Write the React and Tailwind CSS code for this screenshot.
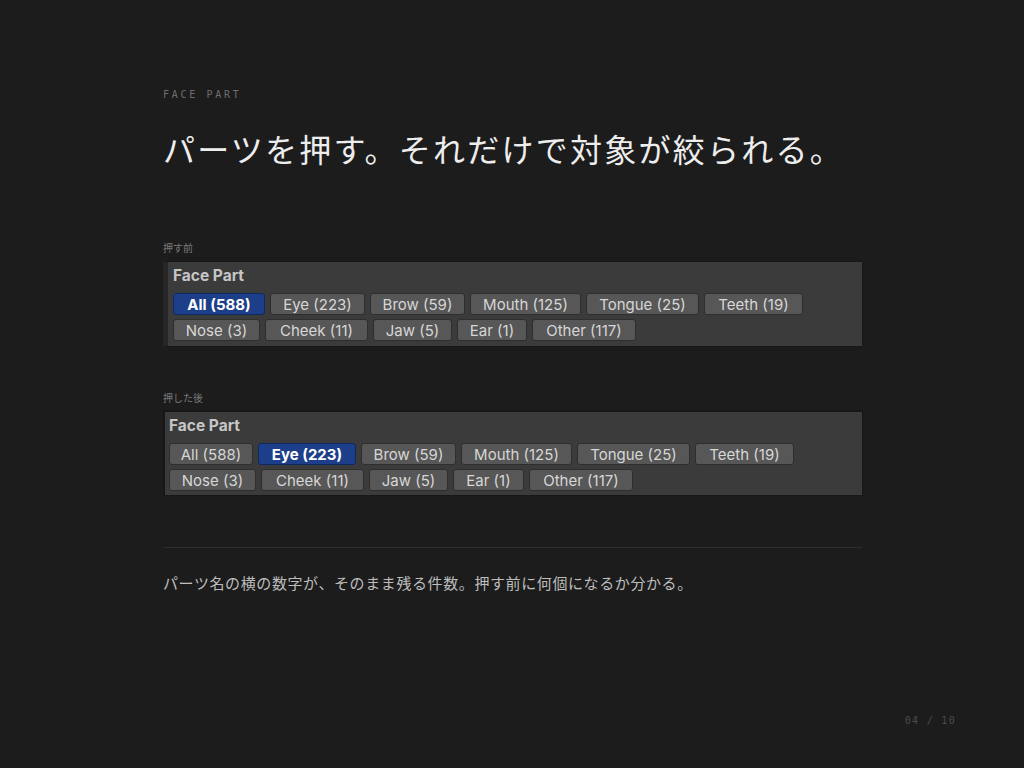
import React from "react";

const rowsBefore = [
  [["All", 588, 92], ["Eye", 223, 95], ["Brow", 59, 95], ["Mouth", 125, 111], ["Tongue", 25, 113], ["Teeth", 19, 99]],
  [["Nose", 3, 87], ["Cheek", 11, 103], ["Jaw", 5, 79], ["Ear", 1, 70], ["Other", 117, 104]],
];

const rowsAfter = [
  [["All", 588, 84], ["Eye", 223, 98], ["Brow", 59, 95], ["Mouth", 125, 111], ["Tongue", 25, 113], ["Teeth", 19, 99]],
  [["Nose", 3, 87], ["Cheek", 11, 103], ["Jaw", 5, 79], ["Ear", 1, 71], ["Other", 117, 104]],
];

const PartButton = ({ label, count, width, active }) => (
  <div
    className={
      active
        ? "shrink-0 h-[22px] flex items-center justify-center rounded-[3px] border border-[#0e2a63] bg-[#1d3e88] text-white font-bold text-[15px] leading-none"
        : "shrink-0 h-[22px] flex items-center justify-center rounded-[3px] border border-[#2e2e2e] bg-[#575757] text-[#d6d6d6] text-[15px] leading-none"
    }
    style={{ width }}
  >
    {label} ({count})
  </div>
);

const FacePanel = ({ rows, active, edge }) => (
  <div
    className={
      edge
        ? "w-[700px] h-[86px] border border-[#171717] border-l-[5px] border-l-[#262626] bg-[#3b3b3b] pl-[5px] pt-[5px]"
        : "w-[700px] h-[86px] border-2 border-[#171717] border-r border-b bg-[#3b3b3b] pl-[4px] pt-[5px]"
    }
    style={{ fontFamily: "Inter, 'Liberation Sans', sans-serif" }}
  >
    <div className="text-[15.5px] font-bold text-[#c6c6c6] leading-[18px] h-[22px]">Face Part</div>
    <div className="flex flex-col gap-[4px] mt-[4px]">
      {rows.map((row, i) => (
        <div key={i} className="flex gap-[5px]">
          {row.map(([l, c, w]) => (
            <PartButton key={l} label={l} count={c} width={w} active={l === active} />
          ))}
        </div>
      ))}
    </div>
  </div>
);

const jp = { fontFamily: "'Noto Sans CJK JP', 'Noto Sans', sans-serif" };
const mono = { fontFamily: "'DejaVu Sans Mono', 'Liberation Mono', monospace" };

export default function App() {
  return (
    <div className="w-[1024px] h-[768px] bg-[#1c1c1c] flex flex-col overflow-hidden">
      <div className="pl-[163px] pt-[89px]">
        <div className="text-[10px] leading-[12px] tracking-[0.27em] text-[#6e6e6e]" style={mono}>
          FACE PART
        </div>
        <h1 className="mt-[25px] text-[32px] leading-[44px] tracking-[0.07em] text-[#ededed]" style={jp}>
          パーツを押す。それだけで対象が絞られる。
        </h1>

        <div className="mt-[71px] text-[10px] leading-[14px] text-[#7a7a7a]" style={jp}>押す前</div>
        <div className="mt-[6px]">
          <FacePanel rows={rowsBefore} active="All" edge />
        </div>

        <div className="mt-[44px] text-[10px] leading-[14px] text-[#7a7a7a]" style={jp}>押した後</div>
        <div className="mt-[5px]">
          <FacePanel rows={rowsAfter} active="Eye" />
        </div>

        <div className="mt-[51px] w-[699px] h-px bg-[#2d2d2d]" />

        <p className="mt-[24px] text-[15px] leading-[22px] tracking-[0.04em] text-[#bdbdbd]" style={jp}>
          パーツ名の横の数字が、そのまま残る件数。押す前に何個になるか分かる。
        </p>
      </div>

      <div className="mt-auto mb-[41px] flex justify-end pr-[68px]">
        <div className="text-[10px] leading-[12px] tracking-[0.13em] text-[#4b4b4b]" style={mono}>
          04 / 10
        </div>
      </div>
    </div>
  );
}
